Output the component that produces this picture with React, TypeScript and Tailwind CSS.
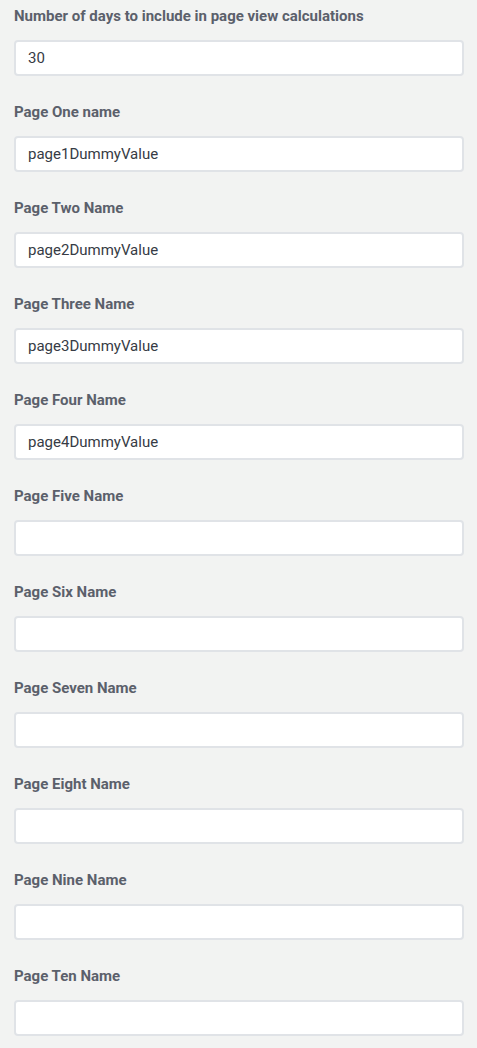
import React from "react";

const fields: { label: string; value: string }[] = [
  { label: "Number of days to include in page view calculations", value: "30" },
  { label: "Page One name", value: "page1DummyValue" },
  { label: "Page Two Name", value: "page2DummyValue" },
  { label: "Page Three Name", value: "page3DummyValue" },
  { label: "Page Four Name", value: "page4DummyValue" },
  { label: "Page Five Name", value: "" },
  { label: "Page Six Name", value: "" },
  { label: "Page Seven Name", value: "" },
  { label: "Page Eight Name", value: "" },
  { label: "Page Nine Name", value: "" },
  { label: "Page Ten Name", value: "" },
];

export default function App() {
  return (
    <div
      className="min-h-[1048px] bg-[#f2f3f2] pl-[14px] pr-[13px] pt-[6px] flex flex-col"
      style={{ fontFamily: "Roboto, 'Liberation Sans', sans-serif" }}
    >
      {fields.map((f) => (
        <div key={f.label} className="flex flex-col pb-[26px]">
          <label className="h-[20px] leading-[20px] text-[15px] font-bold text-[#5b606b]">
            {f.label}
          </label>
          <input
            readOnly
            defaultValue={f.value}
            className="mt-[14px] h-[36px] w-full rounded-[4px] border-2 border-[#e0e3e7] bg-white px-[12px] text-[15px] text-[#363b45] outline-none"
            style={{ fontFamily: "Roboto, 'Liberation Sans', sans-serif" }}
          />
        </div>
      ))}
    </div>
  );
}
